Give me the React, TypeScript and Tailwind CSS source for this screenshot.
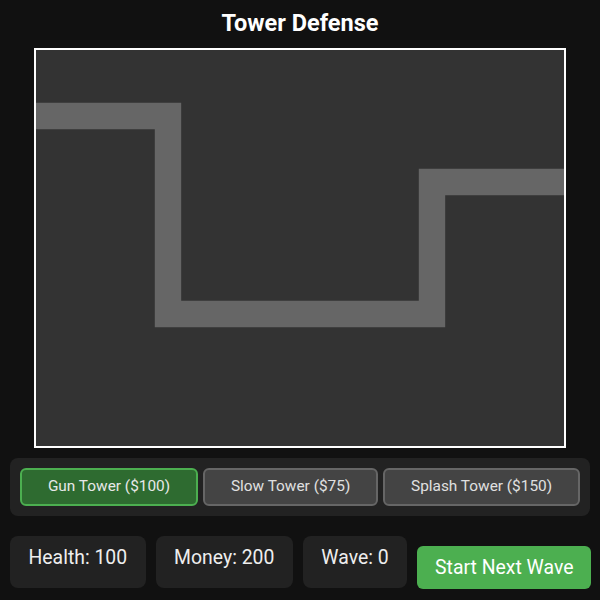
import React from "react";

const towers = [
  { name: "Gun Tower", cost: 100, active: true },
  { name: "Slow Tower", cost: 75, active: false },
  { name: "Splash Tower", cost: 150, active: false },
];

// Enemy route across the 800x600 field
const pathPoints = "0,100 200,100 200,400 600,400 600,200 800,200";

export default function App() {
  return (
    <div
      className="w-full h-[600px] bg-[#111111] flex flex-col items-center"
      style={{ fontFamily: "Roboto, 'Noto Sans', sans-serif" }}
    >
      <h1 className="mt-[9px] text-[23.5px] leading-[28px] font-bold text-white">
        Tower Defense
      </h1>

      <div className="mt-[11px] w-[532px] h-[400px] border-2 border-white bg-[#333333]">
        <svg width="528" height="396" viewBox="0 0 800 600" className="block">
          <polyline
            points={pathPoints}
            fill="none"
            stroke="#666666"
            strokeWidth="40"
            strokeLinejoin="miter"
            strokeLinecap="butt"
          />
        </svg>
      </div>

      <div className="mt-[10px] w-[580px] bg-[#222222] rounded-lg p-[10px] flex gap-[5px]">
        {towers.map((t) => (
          <button
            key={t.name}
            className={
              t.active
                ? "flex-auto whitespace-nowrap h-[38px] px-5 rounded-md border-2 border-[#4caf50] bg-[#2e6b30] text-[#e8e8e8] text-[15.4px]"
                : "flex-auto whitespace-nowrap h-[38px] px-5 rounded-md border-2 border-[#666666] bg-[#444444] text-[#e0e0e0] text-[15.4px]"
            }
          >
            {t.name} (${t.cost})
          </button>
        ))}
      </div>

      <div className="mt-[20px] w-[580px] flex items-start gap-[10px]">
        <div className="shrink-0 whitespace-nowrap h-[52px] px-[18.5px] pt-[10px] rounded-lg bg-[#222222] text-[#eeeeee] text-[19.4px] leading-[23px]">
          Health: 100
        </div>
        <div className="shrink-0 whitespace-nowrap h-[52px] px-[18.5px] pt-[10px] rounded-lg bg-[#222222] text-[#eeeeee] text-[19.4px] leading-[23px]">
          Money: 200
        </div>
        <div className="shrink-0 whitespace-nowrap h-[52px] px-[18.5px] pt-[10px] rounded-lg bg-[#222222] text-[#eeeeee] text-[19.4px] leading-[23px]">
          Wave: 0
        </div>
        <button className="shrink-0 whitespace-nowrap mt-[10px] h-[43px] px-[18px] rounded-md bg-[#4caf50] text-white text-[19.4px] leading-[23px]">
          Start Next Wave
        </button>
      </div>
    </div>
  );
}
